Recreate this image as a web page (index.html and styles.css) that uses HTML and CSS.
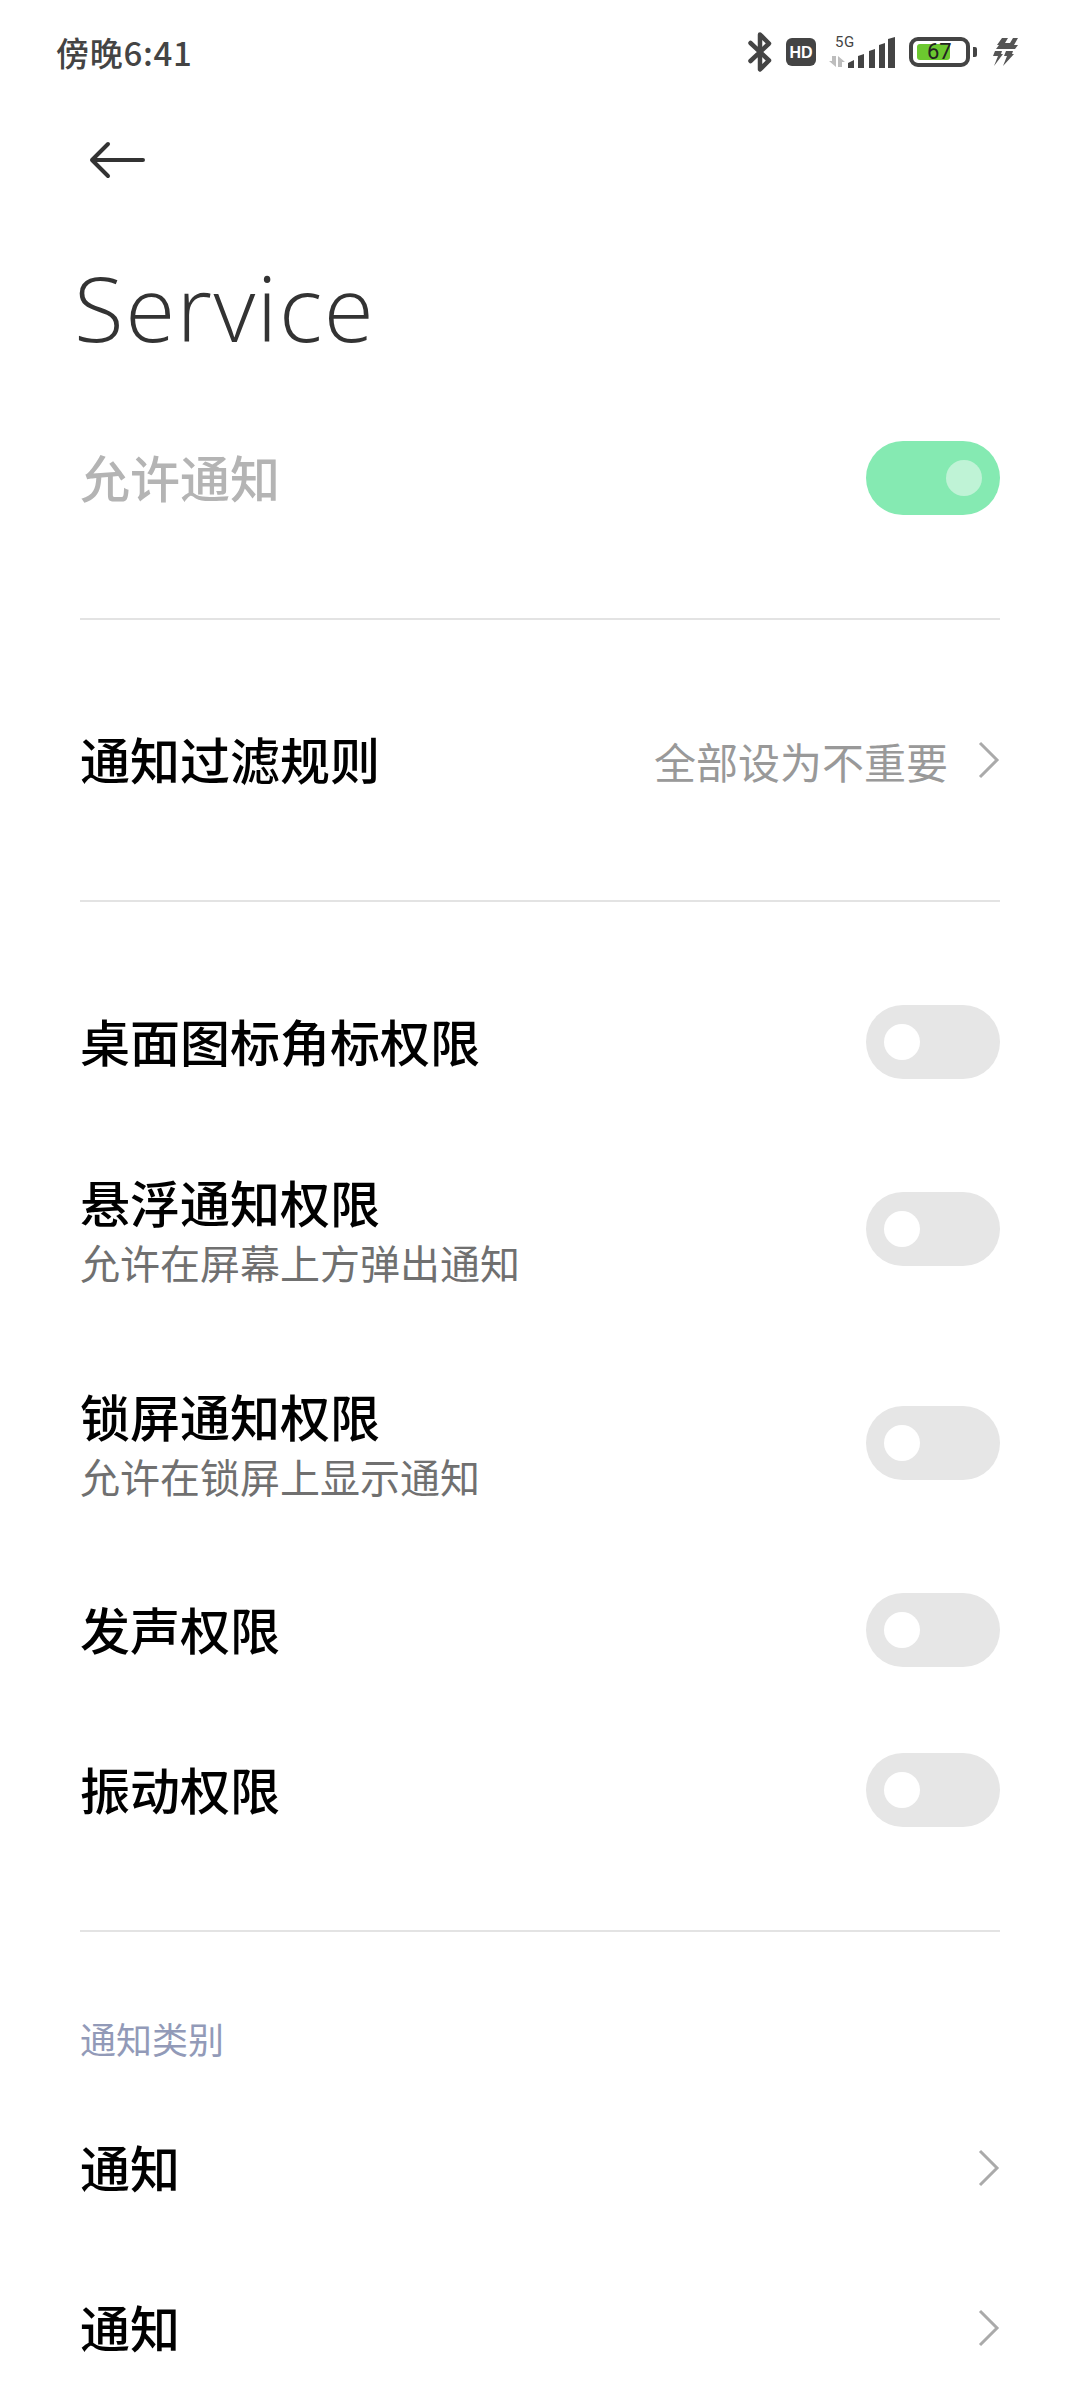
FILE: index.html
```html
<!DOCTYPE html>
<html lang="zh-CN">
<head>
    <meta charset="UTF-8">
    <meta name="viewport" content="width=device-width, initial-scale=1.0">
    <title>Service</title>
    <link rel="stylesheet" href="styles.css">
</head>
<body>
    <div class="status-bar">
        <span class="status-time">傍晚6:41</span>
        <div class="status-icons">
            <svg class="icon-bt" viewBox="0 0 24 42" fill="none" stroke="#444" stroke-width="4.5" stroke-linejoin="round" stroke-linecap="round">
                <path d="M2.500 12 21 29.500 12 38.500V3.500l9 9L2.500 30"/>
            </svg>
            <svg class="icon-hd" viewBox="0 0 30 28">
                <rect width="30" height="28" rx="6" fill="#444"/>
                <text x="15" y="19.500" text-anchor="middle" class="hd-text">HD</text>
            </svg>
            <svg class="icon-signal" viewBox="0 0 68 32">
                <text x="7" y="11" class="net-text">5G</text>
                <path d="M4 20h4v11L1 25h3zM10 31h4v-5h3l-7-6z" fill="#bdbdbd"/>
                <path d="M20 27l6-3v8h-6z" fill="#444"/>
                <path d="M30 20l6-2v14h-6z" fill="#444"/>
                <path d="M41 15l6-2v19h-6z" fill="#444"/>
                <path d="M51 9l6-2v25h-6z" fill="#444"/>
                <path d="M60 3l7-2v31h-7z" fill="#444"/>
            </svg>
            <div class="battery">
                <div class="battery-body">
                    <div class="battery-fill"></div>
                    <span class="battery-level">67</span>
                </div>
                <div class="battery-nub"></div>
            </div>
            <svg class="icon-bolt" viewBox="0 0 25 28" fill="#555">
                <path d="M9 0h6l-3 5h5l3-5h5l-4 7h4l-3 4H3l3-4H4z"/>
                <path d="M2 13h7l-1 3h2L1 28l4-10H0z"/>
                <path d="M13 13h7l-1 3h2L10 28l4-10h-3z"/>
            </svg>
        </div>
    </div>

    <div class="page">
        <button class="back-button">
            <svg viewBox="0 0 60 40" fill="none" stroke="#333" stroke-width="4" stroke-linecap="round" stroke-linejoin="round">
                <path d="M55 20H4M20 4 4 20l16 16"/>
            </svg>
        </button>
        <h1 class="page-title">Service</h1>

        <div class="section">
            <div class="row">
                <div class="row-title disabled">允许通知</div>
                <div class="switch on"><div class="knob"></div></div>
            </div>
        </div>

        <div class="section">
            <div class="row">
                <div class="row-title">通知过滤规则</div>
                <div class="row-value">
                    全部设为不重要
                    <svg class="chevron" viewBox="0 0 22 38" fill="none" stroke="#aaa" stroke-width="3">
                        <path d="M2 2l17 17L2 36"/>
                    </svg>
                </div>
            </div>
        </div>

        <div class="section">
            <div class="row">
                <div class="row-title">桌面图标角标权限</div>
                <div class="switch"><div class="knob"></div></div>
            </div>
            <div class="row tall">
                <div>
                    <div class="row-title">悬浮通知权限</div>
                    <div class="row-sub">允许在屏幕上方弹出通知</div>
                </div>
                <div class="switch"><div class="knob"></div></div>
            </div>
            <div class="row tall">
                <div>
                    <div class="row-title">锁屏通知权限</div>
                    <div class="row-sub">允许在锁屏上显示通知</div>
                </div>
                <div class="switch"><div class="knob"></div></div>
            </div>
            <div class="row">
                <div class="row-title">发声权限</div>
                <div class="switch"><div class="knob"></div></div>
            </div>
            <div class="row">
                <div class="row-title">振动权限</div>
                <div class="switch"><div class="knob"></div></div>
            </div>
        </div>

        <div class="section last">
            <div class="section-label">通知类别</div>
            <div class="row">
                <div class="row-title">通知</div>
                <svg class="chevron" viewBox="0 0 22 38" fill="none" stroke="#aaa" stroke-width="3">
                    <path d="M2 2l17 17L2 36"/>
                </svg>
            </div>
            <div class="row">
                <div class="row-title">通知</div>
                <svg class="chevron" viewBox="0 0 22 38" fill="none" stroke="#aaa" stroke-width="3">
                    <path d="M2 2l17 17L2 36"/>
                </svg>
            </div>
        </div>
    </div>
</body>
</html>
```

FILE: styles.css
```css
html, body {
    height: 2400px;
    overflow: hidden;
}
body {
    font-family: "Noto Sans CJK SC", "Noto Sans", sans-serif;
    margin: 0;
    background: #fff;
    color: #000;
}
.status-bar {
    height: 104px;
    padding: 0 62px 0 56px;
    display: flex;
    align-items: center;
    justify-content: space-between;
}
.status-time {
    font-size: 33px;
    line-height: 100px;
    letter-spacing: 0.7px;
    font-weight: 500;
    color: #444;
}
.status-icons {
    display: flex;
    align-items: center;
}
.icon-bt {
    width: 24px;
    height: 42px;
}
.icon-hd {
    width: 30px;
    height: 28px;
    margin-left: 14px;
}
.hd-text {
    font-family: "Liberation Sans", sans-serif;
    font-size: 16px;
    font-weight: 700;
    fill: #fff;
}
.icon-signal {
    width: 68px;
    height: 32px;
    margin-left: 12px;
    overflow: visible;
}
.net-text {
    font-family: Roboto, sans-serif;
    font-size: 15px;
    letter-spacing: 0.5px;
    fill: #444;
}
.battery {
    display: flex;
    align-items: center;
    margin-left: 13px;
}
.battery-body {
    width: 61px;
    height: 30px;
    box-sizing: border-box;
    border: 4px solid #444;
    border-radius: 9px;
    padding: 3px 4px;
    position: relative;
}
.battery-fill {
    width: 73%;
    height: 100%;
    background: #6cc82f;
    border-radius: 3px;
}
.battery-level {
    position: absolute;
    top: 0;
    left: 14px;
    font-family: Roboto, sans-serif;
    font-size: 22px;
    line-height: 22px;
    color: #222;
}
.battery-nub {
    width: 4px;
    height: 10px;
    background: #444;
    border-radius: 0 2px 2px 0;
    margin-left: 3px;
}
.icon-bolt {
    width: 25px;
    height: 28px;
    margin-left: 16px;
}
.page {
    padding: 0 80px;
}
.back-button {
    display: block;
    width: 60px;
    height: 40px;
    padding: 0;
    margin: 36px 0 0 8px;
    border: none;
    background: none;
}
.back-button svg {
    display: block;
    width: 60px;
    height: 40px;
}
.page-title {
    font-family: "Open Sans", sans-serif;
    font-size: 91px;
    font-weight: 300;
    line-height: 110px;
    letter-spacing: 1.500px;
    color: #333;
    margin: 72px 0 0 -6px;
    height: 146px;
}
.section {
    padding: 0 0 60px;
    margin-bottom: 60px;
    border-bottom: 2px solid #e3e3e3;
}
.section.last {
    padding: 0;
    margin: 0;
    border: none;
}
.row {
    height: 160px;
    display: flex;
    align-items: center;
    justify-content: space-between;
}
.row.tall {
    height: 214px;
}
.row-title {
    font-size: 50px;
    font-weight: 500;
    line-height: 60px;
}
.row > .row-title {
    padding-bottom: 4px;
}
.row-title.disabled {
    color: #b4b4b4;
}
.row-sub {
    font-size: 40px;
    line-height: 50px;
    margin-top: 6px;
    color: #707070;
}
.row-value {
    display: flex;
    align-items: center;
    gap: 30px;
    font-size: 42px;
    color: #999;
}
.chevron {
    width: 22px;
    height: 38px;
}
.switch {
    width: 134px;
    height: 74px;
    border-radius: 37px;
    background: #e6e6e6;
    display: flex;
    align-items: center;
    padding: 0 18px;
    box-sizing: border-box;
}
.switch.on {
    background: #85eab2;
    justify-content: flex-end;
}
.knob {
    width: 36px;
    height: 36px;
    border-radius: 50%;
    background: #fff;
}
.switch.on .knob {
    background: #bff3d6;
}
.section-label {
    font-size: 36px;
    line-height: 92px;
    padding-bottom: 4px;
    color: #929ab8;
}
```
